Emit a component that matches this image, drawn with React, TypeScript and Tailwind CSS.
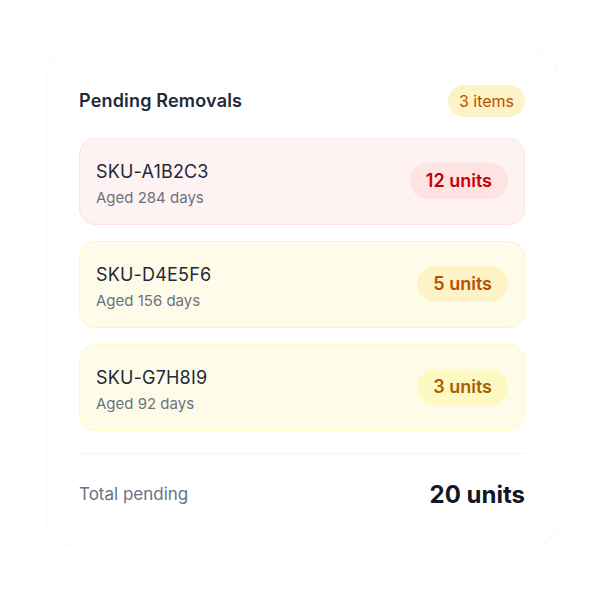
const items = [
  {
    sku: "SKU-A1B2C3",
    age: "Aged 284 days",
    units: "12 units",
    row: "bg-red-50 border-red-100",
    pill: "bg-red-100 text-red-700",
  },
  {
    sku: "SKU-D4E5F6",
    age: "Aged 156 days",
    units: "5 units",
    row: "bg-yellow-50 border-amber-100",
    pill: "bg-amber-100 text-amber-700",
  },
  {
    sku: "SKU-G7H8I9",
    age: "Aged 92 days",
    units: "3 units",
    row: "bg-yellow-50 border-yellow-100",
    pill: "bg-yellow-100 text-yellow-700",
  },
];

export default function App() {
  return (
    <div
      className="min-h-[600px] bg-white flex justify-center pt-[52px] pl-1"
      style={{ fontFamily: "Inter, 'Noto Sans', sans-serif" }}
    >
      <div className="w-[512px] h-fit bg-white border border-gray-100/50 rounded-3xl px-8 pt-8 pb-[34px]">
        <div className="flex items-center justify-between mb-[21px]">
          <h2 className="text-lg font-semibold text-gray-800 tracking-[0.01em]">Pending Removals</h2>
          <span className="bg-amber-100 text-amber-700 text-base leading-6 px-[11px] py-1 rounded-full">
            3 items
          </span>
        </div>

        <div className="flex flex-col gap-4">
          {items.map((item) => (
            <div
              key={item.sku}
              className={`flex items-center justify-between border rounded-2xl px-4 pt-[19px] pb-[14px] ${item.row}`}
            >
              <div>
                <div className="text-lg leading-7 text-gray-800 tracking-[0.01em]">{item.sku}</div>
                <div className="text-[15px] leading-6 text-gray-500">{item.age}</div>
              </div>
              <span className={`px-4 py-1 -mt-1.5 rounded-full text-lg leading-7 font-semibold ${item.pill}`}>
                {item.units}
              </span>
            </div>
          ))}
        </div>

        <div className="mt-[22px] border-t border-gray-100 pt-[25px] flex items-center justify-between">
          <span className="text-[17px] text-gray-500">Total pending</span>
          <span className="text-2xl font-bold text-gray-900 leading-8">20 units</span>
        </div>
      </div>
    </div>
  );
}
